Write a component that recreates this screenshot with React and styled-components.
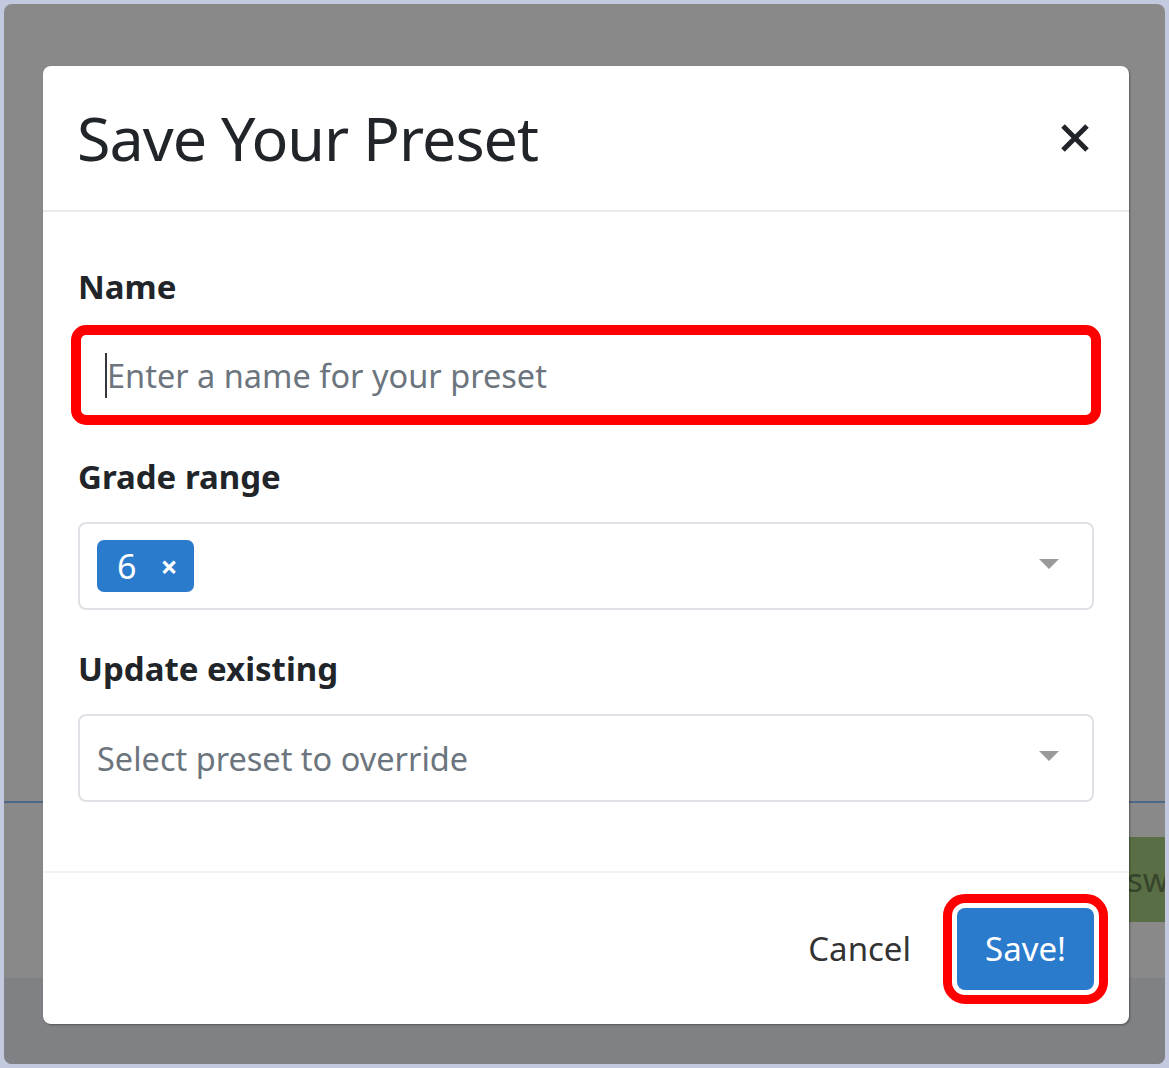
import React from 'react';
import styled, { createGlobalStyle } from 'styled-components';

const GlobalStyle = createGlobalStyle`
  html, body {
    margin: 0;
    padding: 0;
  }
  body {
    background: #c3cae0;
    padding: 4px;
    font-family: "Noto Sans", "Open Sans", sans-serif;
  }
`;

function CloseIcon() {
    return (
        <svg width="28" height="28" viewBox="0 0 28 28">
            <path d="M2 2 L26 26 M26 2 L2 26" stroke="#212529" strokeWidth="5" />
        </svg>
    );
}

function App() {
    return (
        <>
            <GlobalStyle />
            <Frame>
                <PageTop />
                <ActionRow>
                    <GreenButton>Answer</GreenButton>
                </ActionRow>
                <PageFooter />

                <Modal>
                    <Header>
                        <Title>Save Your Preset</Title>
                        <CloseButton><CloseIcon /></CloseButton>
                    </Header>

                    <Body>
                        <Group>
                            <Label>Name</Label>
                            <TextField highlight>
                                <Caret />
                                <Placeholder>Enter a name for your preset</Placeholder>
                            </TextField>
                        </Group>

                        <Group>
                            <Label>Grade range</Label>
                            <Select>
                                <Chip>
                                    <span>6</span>
                                    <ChipRemove>×</ChipRemove>
                                </Chip>
                                <Arrow />
                            </Select>
                        </Group>

                        <Group>
                            <Label>Update existing</Label>
                            <Select>
                                <Placeholder>Select preset to override</Placeholder>
                                <Arrow />
                            </Select>
                        </Group>
                    </Body>

                    <Footer>
                        <CancelButton>Cancel</CancelButton>
                        <SaveButton highlight>Save!</SaveButton>
                    </Footer>
                </Modal>
            </Frame>
        </>
    );
}

export default App;

const Frame = styled.div`
    position: relative;
    width: 1161px;
    height: 1060px;
    border-radius: 8px;
    overflow: hidden;
    background: #898989;
    display: flex;
    flex-direction: column;
`;

const PageTop = styled.div`
    height: 797px;
    flex-shrink: 0;
    border-bottom: 2px solid #4d6887;
`;

const ActionRow = styled.div`
    display: flex;
    justify-content: flex-end;
    margin-top: 34px;
`;

const GreenButton = styled.div`
    flex-shrink: 0;
    height: 85px;
    line-height: 85px;
    padding: 0 20px;
    margin-right: -56px;
    background: #5a6e45;
    color: #36452b;
    font-size: 33px;
    white-space: nowrap;
`;

const PageFooter = styled.div`
    margin-top: auto;
    height: 86px;
    background: #808185;
`;

const Modal = styled.div`
    position: absolute;
    left: 39px;
    top: 62px;
    width: 1086px;
    height: 958px;
    background: #fff;
    border-radius: 8px;
    box-shadow: 1px 1px 2px rgba(0, 0, 0, 0.35);
    display: flex;
    flex-direction: column;
`;

const Header = styled.div`
    height: 144px;
    flex-shrink: 0;
    display: flex;
    align-items: center;
    justify-content: space-between;
    padding: 0 40px 0 34px;
    border-bottom: 2px solid #e9ecef;
`;

const Title = styled.h3`
    margin: 0;
    font-size: 61px;
    font-weight: 400;
    letter-spacing: -1px;
    line-height: 1.2;
    color: #212529;
`;

const CloseButton = styled.button`
    background: none;
    border: none;
    padding: 0;
    display: flex;
    cursor: pointer;
`;

const Body = styled.div`
    flex: 1;
    padding: 54px 35px 0 35px;
`;

const Group = styled.div`
    margin-bottom: 38px;
`;

const Label = styled.div`
    font-size: 33px;
    font-weight: 700;
    line-height: 42px;
    color: #212529;
    margin-bottom: 24px;
`;

const TextField = styled.div`
    height: 86px;
    box-sizing: border-box;
    border: 2px solid #dee2e6;
    border-radius: 8px;
    display: flex;
    align-items: center;
    padding-left: 25px;
    outline: ${props => props.highlight ? '10px solid #ff0000' : 'none'};
    outline-offset: -3px;
`;

const Caret = styled.span`
    width: 2px;
    height: 45px;
    background: #33373b;
`;

const Placeholder = styled.span`
    font-size: 32.5px;
    color: #6c757d;
`;

const Select = styled.div`
    height: 88px;
    box-sizing: border-box;
    border: 2px solid #dee2e6;
    border-radius: 8px;
    display: flex;
    align-items: center;
    padding: 0 33px 0 17px;
`;

const Chip = styled.div`
    height: 52px;
    display: flex;
    align-items: center;
    gap: 24px;
    padding: 0 16px 0 20px;
    background: #2b7bcd;
    border-radius: 7px;
    color: #fff;
    font-size: 34px;
`;

const ChipRemove = styled.span`
    font-size: 30px;
    font-weight: 700;
`;

const Arrow = styled.span`
    margin-left: auto;
    margin-top: -4px;
    width: 0;
    height: 0;
    border-left: 10px solid transparent;
    border-right: 10px solid transparent;
    border-top: 10px solid #999;
`;

const Footer = styled.div`
    height: 151px;
    flex-shrink: 0;
    border-top: 2px solid #f2f3f5;
    display: flex;
    align-items: center;
    justify-content: flex-end;
    padding-right: 35px;
`;

const CancelButton = styled.button`
    background: none;
    border: none;
    padding: 0;
    margin-right: 46px;
    font-family: inherit;
    font-size: 33px;
    color: #333;
`;

const SaveButton = styled.button`
    width: 137px;
    height: 82px;
    border: none;
    border-radius: 8px;
    background: #2b7bcd;
    color: #fff;
    font-family: inherit;
    font-size: 33px;
    outline: ${props => props.highlight ? '9px solid #ff0000' : 'none'};
    outline-offset: 5px;
`;
